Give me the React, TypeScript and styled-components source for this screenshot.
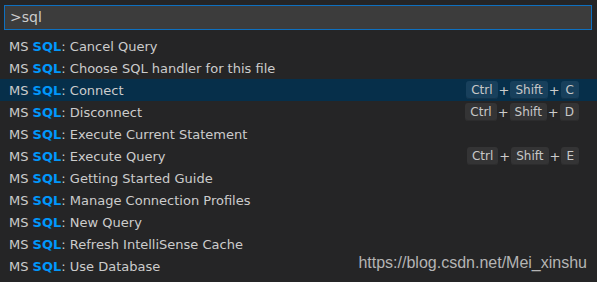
import React from "react";
import styled, { createGlobalStyle } from "styled-components";

const GlobalStyle = createGlobalStyle`
  html, body {
    margin: 0;
    padding: 0;
    background: #252526;
  }
  body {
    font-family: "DejaVu Sans", "Noto Sans", sans-serif;
  }
`;

type Item = {
  label: string;
  keys?: string[];
  selected?: boolean;
};

const items: Item[] = [
  { label: "Cancel Query" },
  { label: "Choose SQL handler for this file" },
  { label: "Connect", keys: ["Ctrl", "Shift", "C"], selected: true },
  { label: "Disconnect", keys: ["Ctrl", "Shift", "D"] },
  { label: "Execute Current Statement" },
  { label: "Execute Query", keys: ["Ctrl", "Shift", "E"] },
  { label: "Getting Started Guide" },
  { label: "Manage Connection Profiles" },
  { label: "New Query" },
  { label: "Refresh IntelliSense Cache" },
  { label: "Use Database" },
];

export default function App() {
  return (
    <>
      <GlobalStyle />
      <Palette>
        <InputWrap>
          <Input>&gt;sql</Input>
        </InputWrap>
        <List>
          {items.map((item) => (
            <Row key={item.label} selected={item.selected}>
              <Label>
                MS <Match>SQL</Match>: {item.label}
              </Label>
              {item.keys && (
                <Keys>
                  {item.keys.map((k, i) => (
                    <React.Fragment key={k}>
                      {i > 0 && <Plus>+</Plus>}
                      <Key selected={item.selected}>{k}</Key>
                    </React.Fragment>
                  ))}
                </Keys>
              )}
            </Row>
          ))}
        </List>
        <Watermark>https://blog.csdn.net/Mei_xinshu</Watermark>
      </Palette>
    </>
  );
}

const Palette = styled.div`
  position: relative;
  width: 597px;
  height: 282px;
  background: #252526;
  color: #cccccc;
  overflow: hidden;
`;

const InputWrap = styled.div`
  padding: 5px 5px 0 4px;
`;

const Input = styled.div`
  height: 23px;
  border: 1px solid #0e70c0;
  background: #3c3c3c;
  color: #cccccc;
  font-size: 14px;
  line-height: 23px;
  padding-left: 5px;
`;

const List = styled.div`
  margin-top: 5px;
  display: flex;
  flex-direction: column;
`;

const Row = styled.div<{ selected?: boolean }>`
  display: flex;
  align-items: center;
  height: 22px;
  padding: 0 18px 0 9px;
  background: ${(p) => (p.selected ? "#062f4a" : "transparent")};
  font-size: 13px;
`;

const Label = styled.div`
  flex: 1;
  white-space: nowrap;
`;

const Match = styled.span`
  color: #0097fb;
  font-weight: bold;
`;

const Keys = styled.div`
  display: flex;
  align-items: center;
  font-size: 12px;
`;

const Key = styled.span<{ selected?: boolean }>`
  display: inline-block;
  height: 18px;
  line-height: 18px;
  padding: 0 5px;
  border-radius: 3px;
  background: ${(p) => (p.selected ? "#18405c" : "#343435")};
  box-shadow: inset 0 -1px 0 ${(p) => (p.selected ? "#12334b" : "#2c2c2d")};
  color: #c8c8c8;
`;

const Plus = styled.span`
  color: #cccccc;
  font-size: 13px;
  padding: 0 1px;
`;

const Watermark = styled.div`
  position: absolute;
  right: 10px;
  bottom: 10px;
  font-family: "Liberation Sans", Arial, sans-serif;
  font-size: 16px;
  color: #b4b4b4;
`;
